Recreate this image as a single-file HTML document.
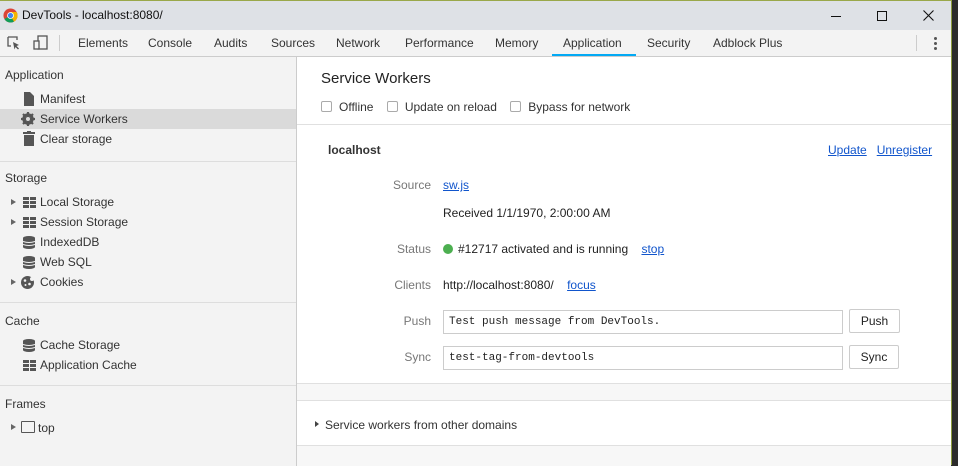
<!DOCTYPE html>
<html><head><style>
*{box-sizing:border-box;margin:0;padding:0}
body{width:958px;height:465px;overflow:hidden;background:#2b2b2b;font-family:"Liberation Sans",sans-serif;font-size:12px;color:#222;position:relative}
#win{position:absolute;left:0;top:0;width:952px;height:465px;background:#fff;border-right:1px solid #8a9a3a;border-top:1px solid #9aa84a}
#title{position:absolute;left:0;top:0;width:951px;height:29px;background:#dee1e6}
#title .t{position:absolute;left:22px;top:7px;font-size:12px;color:#111}
#tb{position:absolute;left:0;top:29px;width:951px;height:27px;background:#f3f3f3;border-bottom:1px solid #ccc}
.tab{position:absolute;top:6px;color:#333;font-size:12px}
.abs{position:absolute}
#side{position:absolute;left:0;top:56px;width:297px;height:409px;background:#f3f3f3;border-right:1px solid #ccc}
.sh{position:absolute;left:5px;color:#333;font-size:12px}
.si{position:absolute;left:40px;color:#333;font-size:12px}
.sep{position:absolute;left:0;width:296px;height:1px;background:#ddd}
.ic{position:absolute;left:23px}
.tri{position:absolute;left:11px;width:0;height:0;border-left:5px solid #666;border-top:3.5px solid transparent;border-bottom:3.5px solid transparent}
.lbl{position:absolute;color:#777;text-align:right}
.lnk{color:#1155cc;text-decoration:underline}
.cb{display:inline-block;width:11px;height:11px;border:1px solid #aaa;border-radius:2px;background:#fff;vertical-align:-1px;margin-right:7px}
.inp{position:absolute;left:443px;width:400px;height:24px;border:1px solid #ccc;font-family:"Liberation Mono",monospace;font-size:11px;padding:5px 5px;color:#222}
.btn{position:absolute;left:849px;width:51px;height:24px;border:1px solid #ccc;border-radius:2px;text-align:center;padding-top:4px;background:#fff}
</style></head><body>
<div id="win">
<div id="title">
<svg class="abs" style="left:3px;top:7px" width="15" height="15" viewBox="0 0 16 16"><circle cx="8" cy="8" r="7.5" fill="#db4437"/><path d="M8 8 L1.5 11.75 A7.5 7.5 0 0 0 11.75 14.5Z" fill="#0f9d58"/><path d="M8 8 L11.75 14.5 A7.5 7.5 0 0 0 14.5 4.25 L8 4.25Z" fill="#f4b400"/><circle cx="8" cy="8" r="3.6" fill="#fff"/><circle cx="8" cy="8" r="2.8" fill="#4285f4"/></svg>
<div class="t">DevTools - localhost:8080/</div>
<div class="abs" style="left:831px;top:15px;width:10px;height:1px;background:#111"></div>
<div class="abs" style="left:877px;top:10px;width:10px;height:10px;border:1px solid #111"></div>
<svg class="abs" style="left:923px;top:9px" width="11" height="11"><path d="M0.5 0.5L10.5 10.5M10.5 0.5L0.5 10.5" stroke="#111" stroke-width="1.1"/></svg>
</div>
<div id="tb">
<svg class="abs" style="left:7px;top:6px" width="14" height="14"><path d="M1 1h9v3M1 1v9h3" fill="none" stroke="#555" stroke-width="1.3"/><path d="M6 6l6 3-2.5 1 2.5 2.5-1 1-2.5-2.5-1 2.5z" fill="#555"/></svg>
<svg class="abs" style="left:33px;top:5px" width="16" height="16"><rect x="5" y="1" width="9" height="13" fill="none" stroke="#555" stroke-width="1.3"/><rect x="1" y="6" width="5" height="8" fill="#f3f3f3" stroke="#555" stroke-width="1.3"/></svg>
<div class="abs" style="left:59px;top:5px;width:1px;height:16px;background:#ccc"></div>
<span class="tab" style="left:78px">Elements</span>
<span class="tab" style="left:148px">Console</span>
<span class="tab" style="left:214px">Audits</span>
<span class="tab" style="left:271px">Sources</span>
<span class="tab" style="left:336px">Network</span>
<span class="tab" style="left:405px">Performance</span>
<span class="tab" style="left:495px">Memory</span>
<span class="tab" style="left:563px">Application</span>
<div class="abs" style="left:552px;top:24px;width:84px;height:2px;background:#03a9f4"></div>
<span class="tab" style="left:647px">Security</span>
<span class="tab" style="left:713px">Adblock Plus</span>
<div class="abs" style="left:916px;top:5px;width:1px;height:16px;background:#ccc"></div>
<div class="abs" style="left:934px;top:7px;width:3px;height:3px;background:#555;border-radius:50%;box-shadow:0 5px 0 #555,0 10px 0 #555"></div>
</div>
<div id="side">
<div class="sh" style="top:11px">Application</div>
<svg class="ic" style="top:35px" width="12" height="14"><path d="M1 0h6l4 4v10H1z" fill="#555"/></svg>
<div class="si" style="top:35px">Manifest</div>
<div class="abs" style="left:0;top:52px;width:296px;height:20px;background:#dadada"></div>
<svg class="ic" style="top:55px;left:21px" width="14" height="14" viewBox="0 0 14 14"><circle cx="7" cy="7" r="4.5" fill="none" stroke="#555" stroke-width="2.5"/><path d="M7 0v14M0 7h14M2 2l10 10M12 2L2 12" stroke="#555" stroke-width="2.2"/><circle cx="7" cy="7" r="2" fill="#dadada"/></svg>
<div class="si" style="top:55px">Service Workers</div>
<svg class="ic" style="top:74px" width="12" height="15"><rect x="0" y="1" width="12" height="2" fill="#555"/><rect x="4" y="0" width="4" height="2" fill="#555"/><rect x="1" y="4" width="10" height="11" fill="#555"/></svg>
<div class="si" style="top:75px">Clear storage</div>
<div class="sep" style="top:104px"></div>
<div class="sh" style="top:114px">Storage</div>
<div class="tri" style="top:142px"></div>
<svg class="ic" style="top:140px" width="13" height="11"><path d="M0 0h6v3H0zM7 0h6v3H7zM0 4h6v3H0zM7 4h6v3H7zM0 8h6v3H0zM7 8h6v3H7z" fill="#555"/></svg>
<div class="si" style="top:138px">Local Storage</div>
<div class="tri" style="top:162px"></div>
<svg class="ic" style="top:160px" width="13" height="11"><path d="M0 0h6v3H0zM7 0h6v3H7zM0 4h6v3H0zM7 4h6v3H7zM0 8h6v3H0zM7 8h6v3H7z" fill="#555"/></svg>
<div class="si" style="top:158px">Session Storage</div>
<svg class="ic" style="top:179px" width="12" height="13"><ellipse cx="6" cy="2" rx="6" ry="2" fill="#555"/><rect y="2" width="12" height="9" fill="#555"/><ellipse cx="6" cy="11" rx="6" ry="2" fill="#555"/><path d="M0 5.5q6 2 12 0M0 8.5q6 2 12 0" stroke="#f3f3f3" fill="none"/></svg>
<div class="si" style="top:178px">IndexedDB</div>
<svg class="ic" style="top:199px" width="12" height="13"><ellipse cx="6" cy="2" rx="6" ry="2" fill="#555"/><rect y="2" width="12" height="9" fill="#555"/><ellipse cx="6" cy="11" rx="6" ry="2" fill="#555"/><path d="M0 5.5q6 2 12 0M0 8.5q6 2 12 0" stroke="#f3f3f3" fill="none"/></svg>
<div class="si" style="top:198px">Web SQL</div>
<div class="tri" style="top:222px"></div>
<svg class="ic" style="top:219px;left:21px" width="13" height="13"><circle cx="6.5" cy="6.5" r="6.5" fill="#555"/><circle cx="4" cy="4.5" r="1.3" fill="#f3f3f3"/><circle cx="8.5" cy="8" r="1.3" fill="#f3f3f3"/><circle cx="4.5" cy="9" r="1" fill="#f3f3f3"/><circle cx="11" cy="3" r="2" fill="#f3f3f3"/></svg>
<div class="si" style="top:218px">Cookies</div>
<div class="sep" style="top:245px"></div>
<div class="sh" style="top:257px">Cache</div>
<svg class="ic" style="top:282px" width="12" height="13"><ellipse cx="6" cy="2" rx="6" ry="2" fill="#555"/><rect y="2" width="12" height="9" fill="#555"/><ellipse cx="6" cy="11" rx="6" ry="2" fill="#555"/><path d="M0 5.5q6 2 12 0M0 8.5q6 2 12 0" stroke="#f3f3f3" fill="none"/></svg>
<div class="si" style="top:281px">Cache Storage</div>
<svg class="ic" style="top:303px" width="13" height="11"><path d="M0 0h6v3H0zM7 0h6v3H7zM0 4h6v3H0zM7 4h6v3H7zM0 8h6v3H0zM7 8h6v3H7z" fill="#555"/></svg>
<div class="si" style="top:301px">Application Cache</div>
<div class="sep" style="top:328px"></div>
<div class="sh" style="top:340px">Frames</div>
<div class="tri" style="top:367px"></div>
<div class="abs" style="left:21px;top:364px;width:14px;height:12px;border:1.5px solid #555;border-radius:1px"></div>
<div class="si" style="top:364px;left:38px">top</div>
</div>
<div class="abs" style="left:321px;top:69px;font-size:15px;color:#222">Service Workers</div>
<div class="abs" style="left:321px;top:99px;color:#333"><span class="cb"></span>Offline &nbsp;&nbsp;&nbsp;<span class="cb"></span>Update on reload &nbsp;&nbsp;&nbsp;<span class="cb"></span>Bypass for network</div>
<div class="abs" style="left:297px;top:123px;width:654px;height:1px;background:#e0e0e0"></div>
<div class="abs" style="left:328px;top:142px;font-weight:bold;color:#333">localhost</div>
<div class="abs" style="left:828px;top:142px"><span class="lnk">Update</span>&nbsp;&nbsp; <span class="lnk">Unregister</span></div>
<div class="lbl" style="top:177px;left:370px;width:61px">Source</div>
<div class="abs" style="left:443px;top:177px"><span class="lnk">sw.js</span></div>
<div class="abs" style="left:443px;top:205px">Received 1/1/1970, 2:00:00 AM</div>
<div class="lbl" style="top:241px;left:370px;width:61px">Status</div>
<div class="abs" style="left:443px;top:243px;width:10px;height:10px;border-radius:50%;background:#4caf50"></div>
<div class="abs" style="left:458px;top:241px">#12717 activated and is running &nbsp;&nbsp; <span class="lnk">stop</span></div>
<div class="lbl" style="top:277px;left:370px;width:61px">Clients</div>
<div class="abs" style="left:443px;top:277px">http://localhost:8080/ &nbsp;&nbsp; <span class="lnk">focus</span></div>
<div class="lbl" style="top:313px;left:370px;width:61px">Push</div>
<div class="inp" style="top:309px">Test push message from DevTools.</div>
<div class="btn" style="top:308px">Push</div>
<div class="lbl" style="top:349px;left:370px;width:61px">Sync</div>
<div class="inp" style="top:345px">test-tag-from-devtools</div>
<div class="btn" style="top:344px;width:50px">Sync</div>
<div class="abs" style="left:297px;top:382px;width:654px;height:18px;background:#f7f7f7;border-top:1px solid #e0e0e0;border-bottom:1px solid #e0e0e0"></div>
<div class="abs" style="left:315px;top:420px;width:0;height:0;border-left:4px solid #444;border-top:3.5px solid transparent;border-bottom:3.5px solid transparent"></div>
<div class="abs" style="left:325px;top:417px;color:#333">Service workers from other domains</div>
<div class="abs" style="left:297px;top:444px;width:654px;height:21px;background:#f7f7f7;border-top:1px solid #e0e0e0"></div>
</div>
</body></html>
